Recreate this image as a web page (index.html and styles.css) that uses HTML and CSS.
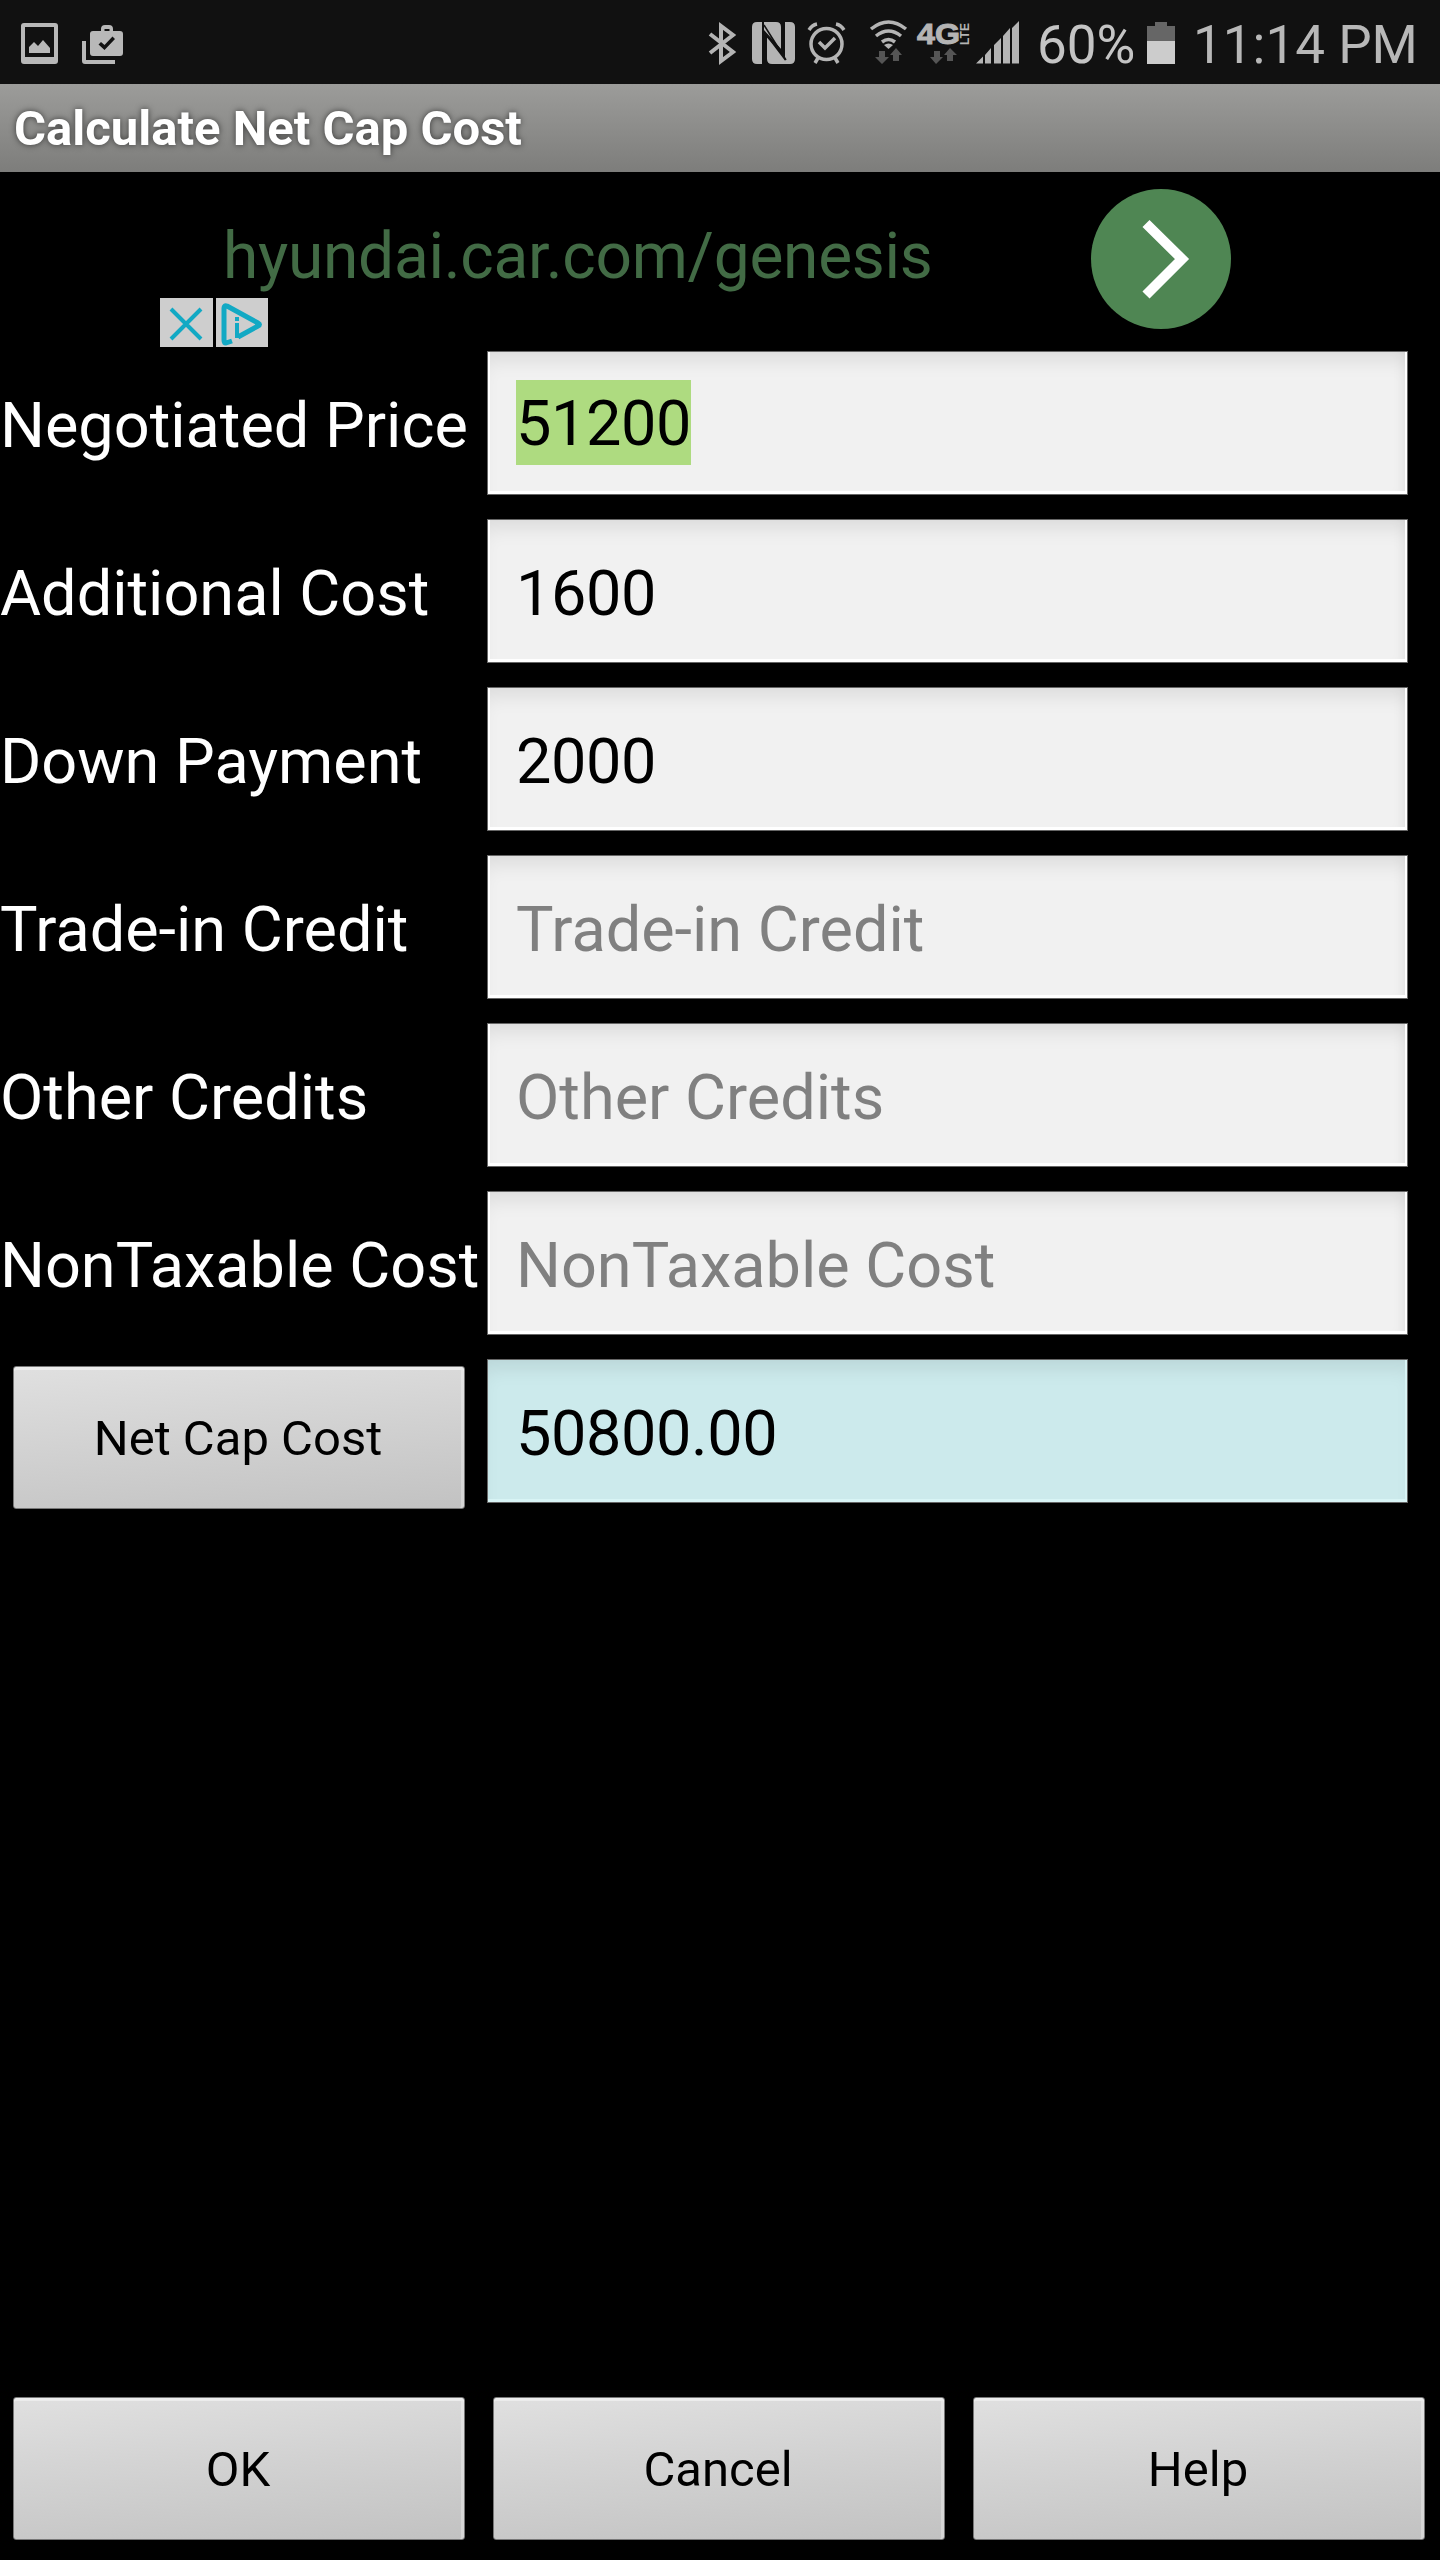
FILE: index.html
```html
<!DOCTYPE html>
<html lang="en">
  <head>
    <meta charset="UTF-8" />
    <meta name="viewport" content="width=device-width, initial-scale=1.0" />
    <title>Calculate Net Cap Cost</title>
    <link rel="stylesheet" href="styles.css">
  </head>

  <body>
    <!-- Status bar -->
    <header class="status">
      <svg class="notices" width="130" height="84" viewBox="0 0 130 84">
        <path fill="#b8b8b8" fill-rule="evenodd" d="M24 23h31q3 0 3 3v35q0 3-3 3H24q-3 0-3-3V26q0-3 3-3zM25 27v30h29V27zM29 47l5-5 4 4 5-6 7 8v5H29z" />
        <path fill="#b8b8b8" fill-rule="evenodd" d="M101 31v-2q0-4 4-4h4q4 0 4 4v2h7q3 0 3 3v19q0 3-3 3H93q-3 0-3-3V34q0-3 3-3zM104.500 31h5v-2h-5zM101 42l-2.500 2.500 6 5.500 10.500-11-2.500-2.500-8 8.500z" />
        <path fill="#b8b8b8" d="M82 41h4v19h29v4H85q-3 0-3-3z" />
      </svg>

      <svg width="312" height="84" viewBox="708 0 312 84">
        <!-- bluetooth -->
        <path d="M710 34l23 18-12 9V26l12 9-23 18" fill="none" stroke="#b4b4b4" stroke-width="4" />
        <!-- nfc -->
        <path fill="#b4b4b4" d="M757 22h5v42h-5q-5 0-5-5V27q0-5 5-5zM785 22h5q5 0 5 5v32q0 5-5 5h-5zM764 22h12q5 0 5 5v22l-17-19zM767 37l19 25v2h-14q-5 0-5-5z" />
        <path d="M763 23v41M764 25l22 35M784 22v34" stroke="#111" stroke-width="1.500" fill="none" />
        <path d="M766 35l17 18" stroke="#111" stroke-width="2" />
        <!-- alarm -->
        <g fill="none" stroke="#b4b4b4" stroke-width="3.500">
          <circle cx="826.500" cy="44" r="15.500" />
          <path d="M819 42l6 6 10-10M809 30q3-5 8-6M836 24q5 1 8 6M818 58l-3 5M835 58l3 5" />
        </g>
        <!-- wifi -->
        <g fill="none" stroke="#b4b4b4" stroke-width="3.500">
          <path d="M871 29q17.500-14 35 0M876 36q12.500-10 25 0M882 42q6.500-5 13 0" />
        </g>
        <path fill="#b4b4b4" d="M884 45q4.500-3 9 0l-4.500 4z" />
        <path fill="#555" d="M879 51h6v6h4l-7 7-7-7h4zM893 61h6v-6h3l-6-7-6 7h3zM934 51h6v6h3l-7 7-6-7h4zM947 61h6v-6h4l-7-7-6 7h3z" />
        <text class="net" x="917" y="43.500" textLength="43" lengthAdjust="spacingAndGlyphs">4G</text>
        <text class="lte" transform="translate(969 45) rotate(-90)" textLength="22" lengthAdjust="spacingAndGlyphs">LTE</text>
        <!-- signal -->
        <path fill="#b4b4b4" d="M976 63.500l7-7v7zM985 55l6-7v15.500h-6zM994 45l7-7v25.500h-7zM1003 36l7-8v35.500h-7zM1012 28l7-7v42.500h-7z" />
      </svg>
      <span class="percent">60%</span>
      <svg class="battery" width="28" height="84" viewBox="0 0 28 84">
        <path fill="#666" d="M0 26h8v-4h12v4h8v15H0z" />
        <path fill="#ccc" d="M0 41h28v23H0z" />
      </svg>
      <span class="clock">11:14 PM</span>
    </header>

    <h1 class="title">Calculate Net Cap Cost</h1>

    <main>
      <!-- Ad banner -->
      <div class="ad">
        <span class="ad-link">hyundai.car.com/genesis</span>
        <svg class="ad-go" width="140" height="140" viewBox="0 0 140 140">
          <circle cx="70" cy="70" r="70" fill="#4f8653" />
          <path d="M55 34.500L91 70l-36 36" fill="none" stroke="#fff" stroke-width="10" />
        </svg>
        <div class="ad-choices">
          <svg width="53" height="49" viewBox="0 0 53 49">
            <path fill="#cecece" d="M0 0h53v49H0z" />
            <path d="M11 11l30 30M41 11L11 41" stroke="#12a9c4" stroke-width="4" />
          </svg>
          <svg width="52" height="49" viewBox="0 0 52 49">
            <path fill="#cecece" d="M0 0h52v49H0z" />
            <path d="M16 43l-6 2q-2 0-2-3V10q0-3 3-2l31 17q3 1.500 0 3L22 39" fill="none" stroke="#12a9c4" stroke-width="5" stroke-linejoin="round" />
            <path d="M21 25v15M21 19v4" stroke="#12a9c4" stroke-width="4" />
          </svg>
        </div>
      </div>

      <!-- Inputs -->
      <form class="fields">
        <label class="label">Negotiated Price</label>
        <div class="field number"><mark>51200</mark></div>

        <label class="label">Additional Cost</label>
        <div class="field number">1600</div>

        <label class="label">Down Payment</label>
        <div class="field number">2000</div>

        <label class="label">Trade-in Credit</label>
        <div class="field hint">Trade-in Credit</div>

        <label class="label">Other Credits</label>
        <div class="field hint">Other Credits</div>

        <label class="label">NonTaxable Cost</label>
        <div class="field hint">NonTaxable Cost</div>

        <button type="button" class="btn calc">Net Cap Cost</button>
        <div class="field number result">50800.00</div>
      </form>
    </main>

    <footer class="actions">
      <button type="button" class="btn">OK</button>
      <button type="button" class="btn">Cancel</button>
      <button type="button" class="btn">Help</button>
    </footer>
  </body>
</html>
```
FILE: styles.css
```css
* {
  box-sizing: border-box;
  margin: 0;
  padding: 0;
}

body {
  display: flex;
  flex-direction: column;
  width: 1440px;
  height: 2560px;
  background-color: #000;
  color: #fff;
  font-family: Roboto, sans-serif;
  overflow: hidden;
}

svg {
  display: block;
  flex: none;
}

.status {
  display: flex;
  height: 84px;
  background-color: #111;
  color: #c4c4c4;
  font-size: 53px;
  line-height: 90px;
  white-space: nowrap;
}

.notices {
  margin-right: 578px;
}

.net,
.lte {
  fill: #b4b4b4;
  font-family: "Liberation Sans", sans-serif;
  font-weight: bold;
  font-size: 30px;
}

.net {
  stroke: #b4b4b4;
  stroke-width: 1px;
}

.lte {
  font-size: 13px;
}

.percent {
  width: 110px;
  margin-left: 17px;
}

.clock {
  margin-left: 18px;
  color: #b8b8b8;
}

.title {
  height: 88px;
  padding: 1px 0 0 14px;
  background: linear-gradient(#9c9c9a, #7d7d7b);
  font-size: 49px;
  line-height: 88px;
  text-shadow: 0 0 6px rgba(0, 0, 0, 0.6);
}

/* Ad banner */
.ad {
  display: grid;
  grid-template-columns: 931px 140px;
  column-gap: 160px;
  position: relative;
  height: 179px;
}

.ad-link {
  padding: 47px 0 0 223px;
  color: #426b45;
  font-size: 64px;
  letter-spacing: -0.27px;
  line-height: 75px;
}

.ad-go {
  margin-top: 17px;
}

.ad-choices {
  position: absolute;
  top: 126px;
  left: 160px;
  display: flex;
  gap: 3px;
}

/* Inputs */
.fields {
  display: grid;
  grid-template-columns: 487px 921px;
  grid-auto-rows: 144px;
  row-gap: 24px;
  align-items: center;
}

.label,
.field {
  padding-top: 4px;
  font-size: 63px;
  white-space: nowrap;
}

.field {
  display: flex;
  align-items: center;
  height: 144px;
  padding-left: 28px;
  background-color: #f1f1f1;
  border: 1px solid #666;
  box-shadow: inset 0 -3px 0 #fff, inset -2px 0 0 #fff, inset 2px 0 0 #fff, inset 0 16px 20px -8px rgba(0, 0, 0, 0.09), inset -10px 0 14px -8px rgba(0, 0, 0, 0.08);
  color: #000;
}

.number {
  letter-spacing: -0.4px;
}

.field mark {
  margin-top: -5px;
  padding-top: 3px;
  background-color: #aedb80;
  line-height: 82px;
}

.hint {
  color: #808080;
}

.result {
  background-color: #cceaec;
  box-shadow: inset 0 -3px 0 #d8f4f5, inset -2px 0 0 #d8f4f5, inset 0 16px 20px -8px rgba(0, 0, 0, 0.09);
}

.btn {
  height: 143px;
  padding: 1px 2px 0 0;
  background: linear-gradient(175deg, #e0e0e0, #c2c2c2);
  border: 1px solid #777;
  border-radius: 3px;
  box-shadow: inset 0 3px 0 #ececec, inset -3px 0 0 rgba(255, 255, 255, 0.3);
  color: #000;
  font-family: inherit;
  font-size: 49px;
}

.calc {
  width: 452px;
  margin: 13px 0 0 13px;
}

/* Bottom buttons */
.actions {
  display: grid;
  grid-template-columns: repeat(3, 452px);
  gap: 28px;
  margin-top: auto;
  padding: 0 0 20px 13px;
}
```
